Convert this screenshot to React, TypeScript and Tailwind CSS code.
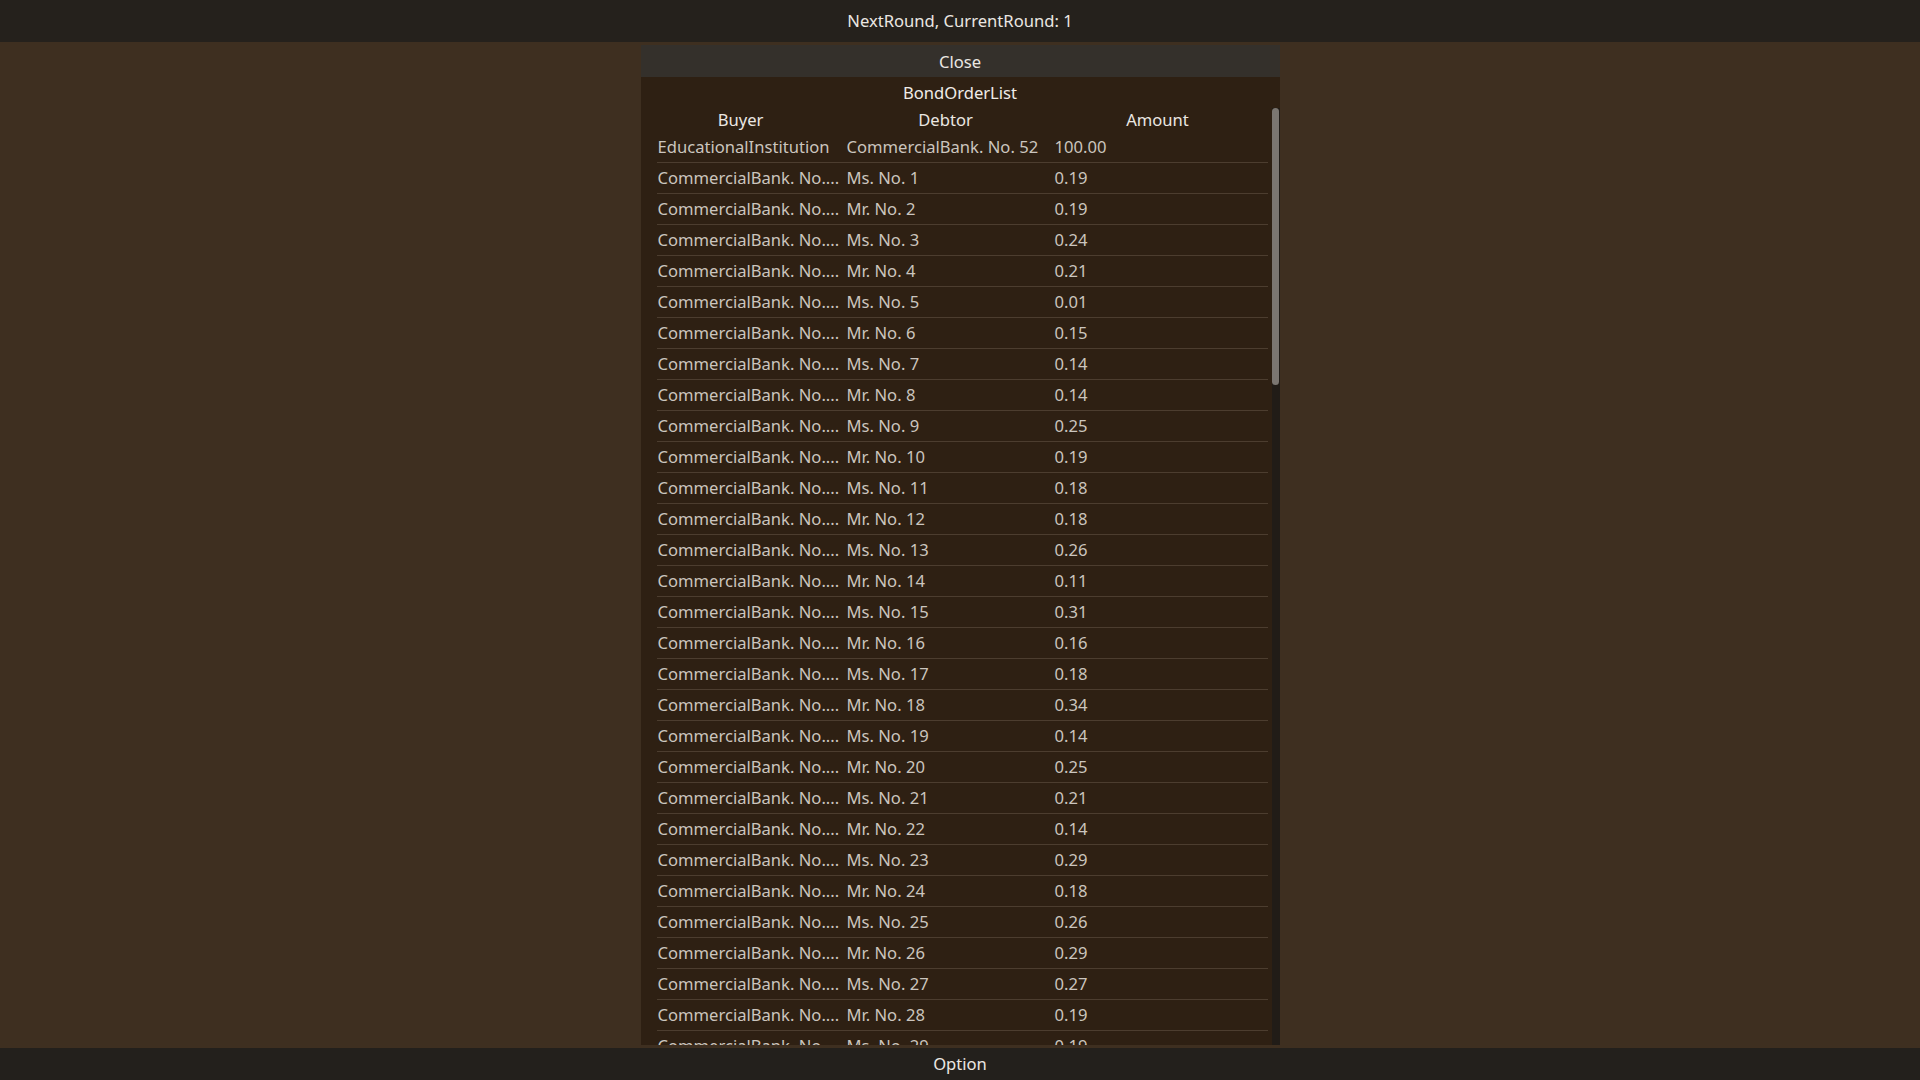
import React from 'react';

const amounts = [
  '0.19', '0.19', '0.24', '0.21', '0.01', '0.15', '0.14', '0.14', '0.25', '0.19',
  '0.18', '0.18', '0.26', '0.11', '0.31', '0.16', '0.18', '0.34', '0.14', '0.25',
  '0.21', '0.14', '0.29', '0.18', '0.26', '0.29', '0.27', '0.19', '0.19', '0.22',
  '0.17', '0.20',
];

const rows = [
  { buyer: 'EducationalInstitution', debtor: 'CommercialBank. No. 52', amount: '100.00' },
  ...amounts.map((amount, i) => ({
    buyer: 'CommercialBank. No....',
    debtor: `${i % 2 === 0 ? 'Ms.' : 'Mr.'} No. ${i + 1}`,
    amount,
  })),
];

const App: React.FC = () => {
  return (
    <div className="h-screen w-full flex flex-col bg-[#3e2f20] font-['Noto_Sans',sans-serif] text-[16.6px]">
      {/* top bar */}
      <div className="h-[42px] shrink-0 flex items-center justify-center bg-[#25211c] text-[#ebe7e2]">
        NextRound, CurrentRound: 1
      </div>

      <div className="flex-1 min-h-0 flex justify-center py-[3px]">
        <div className="w-[639px] flex flex-col bg-[#2e2013]">
          <div className="h-[32px] shrink-0 flex items-center justify-center pt-[2px] bg-[#34302b] text-[#ebe7e2]">
            Close
          </div>
          <div className="h-[31px] shrink-0 flex items-center justify-center pt-[2px] text-[#f0ece8]">
            BondOrderList
          </div>

          {/* list */}
          <div className="flex-1 min-h-0 flex pl-[16px]">
            <div className="flex-1 overflow-hidden">
              <div className="h-[24px] flex items-center text-[#ebe7e2]">
                <div className="w-[168px] text-center">Buyer</div>
                <div className="w-[200px] ml-[21px] text-center">Debtor</div>
                <div className="w-[208px] ml-[8px] text-center">Amount</div>
              </div>
              {rows.map((row, key) => (
                <div key={key} className="h-[31px] flex items-center pt-px border-b border-[#4c3d2f] text-[#cbc5be] whitespace-nowrap">
                  <div className="w-[189px] pl-px overflow-hidden">{row.buyer}</div>
                  <div className="w-[200px] ml-px">{row.debtor}</div>
                  <div className="ml-[8px]">{row.amount}</div>
                </div>
              ))}
            </div>
            {/* scrollbar */}
            <div className="w-[8px] ml-[4px] bg-[#211c17]">
              <div className="h-[277px] w-[7px] rounded-full bg-[#7b7671]" />
            </div>
          </div>
        </div>
      </div>

      {/* bottom bar */}
      <div className="h-[32px] shrink-0 flex items-center justify-center bg-[#23201c] text-[#ebe7e2]">
        Option
      </div>
    </div>
  );
};

export default App;
